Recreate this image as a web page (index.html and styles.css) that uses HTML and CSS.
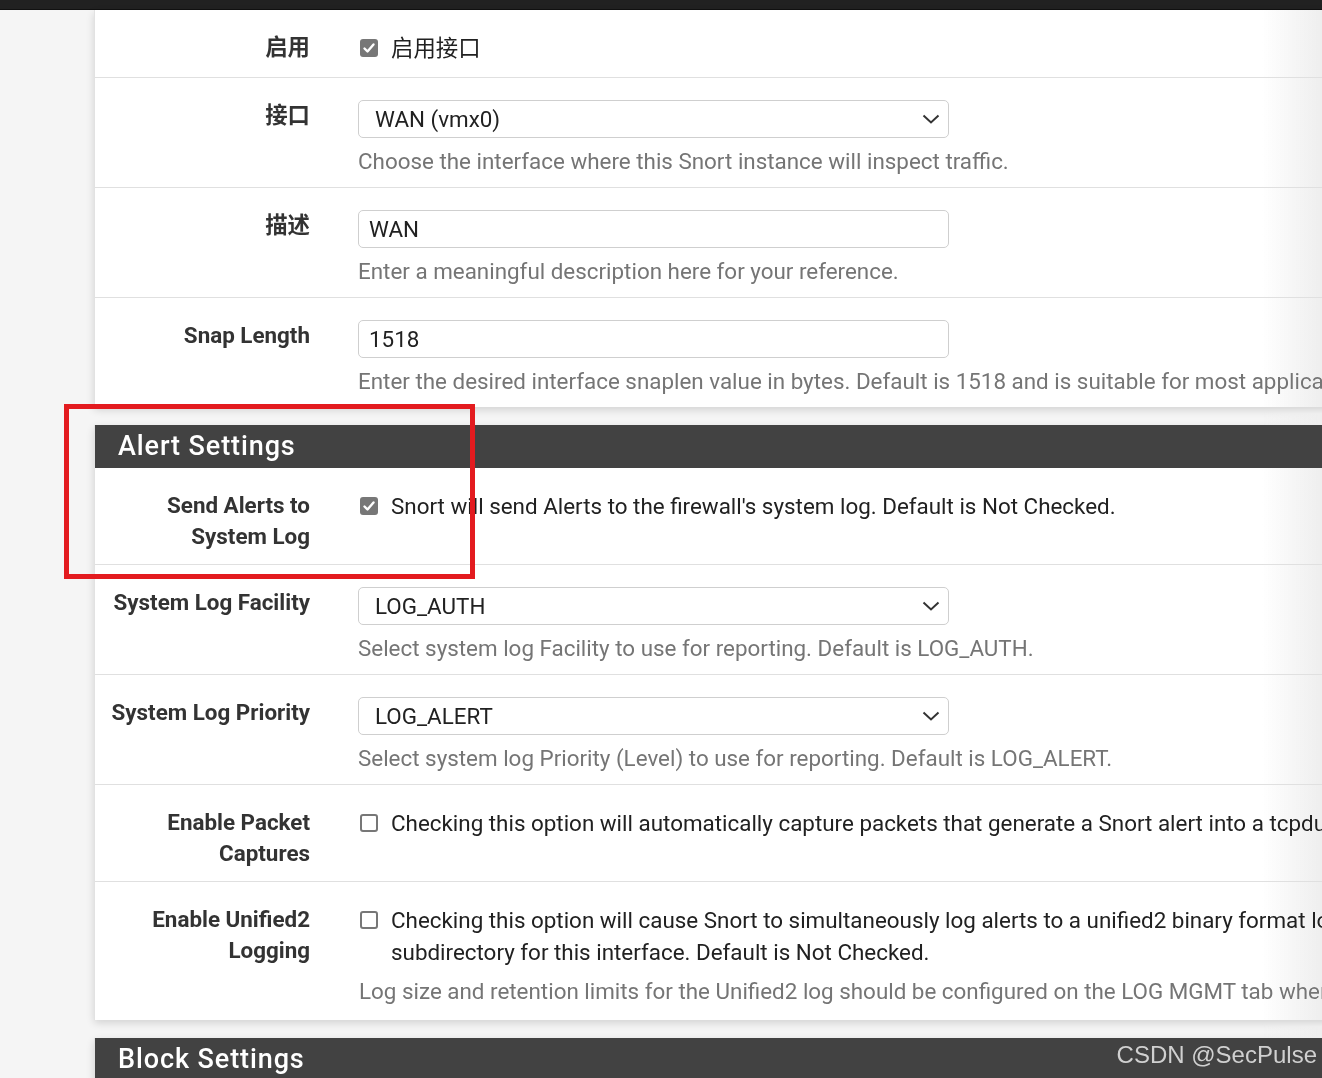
FILE: index.html
```html
<!DOCTYPE html>
<html lang="zh">
<head>
<meta charset="utf-8">
<title>Snort Interface Settings</title>
<link rel="stylesheet" href="styles.css">
</head>
<body>
<div class="topbar"><span class="brand">COMMUNITY EDITION</span></div>
<main class="page">
  <section class="panel">
    <div class="row first">
      <div class="label">启用</div>
      <div class="field">
        <label class="check"><span class="box on"><svg viewBox="0 0 18 18" width="18" height="18"><path d="M4.5 9.5l3 3 6-7" fill="none" stroke="#fff" stroke-width="2.4" stroke-linecap="round" stroke-linejoin="round"/></svg></span>启用接口</label>
      </div>
    </div>
    <div class="row">
      <div class="label">接口</div>
      <div class="field">
        <div class="select"><span>WAN (vmx0)</span><svg class="chev" viewBox="0 0 18 10" width="18" height="10"><path d="M1.5 1.5l7.5 7 7.5-7" fill="none" stroke="#333" stroke-width="2"/></svg></div>
        <div class="help">Choose the interface where this Snort instance will inspect traffic.</div>
      </div>
    </div>
    <div class="row">
      <div class="label">描述</div>
      <div class="field">
        <div class="input">WAN</div>
        <div class="help">Enter a meaningful description here for your reference.</div>
      </div>
    </div>
    <div class="row end">
      <div class="label">Snap Length</div>
      <div class="field">
        <div class="input">1518</div>
        <div class="help">Enter the desired interface snaplen value in bytes. Default is 1518 and is suitable for most applications.</div>
      </div>
    </div>
  </section>

  <section class="panel">
    <h2 class="panel-title">Alert Settings</h2>
    <div class="row">
      <div class="label">Send Alerts to<br>System Log</div>
      <div class="field">
        <label class="check"><span class="box on"><svg viewBox="0 0 18 18" width="18" height="18"><path d="M4.5 9.5l3 3 6-7" fill="none" stroke="#fff" stroke-width="2.4" stroke-linecap="round" stroke-linejoin="round"/></svg></span>Snort will send Alerts to the firewall's system log. Default is Not Checked.</label>
      </div>
    </div>
    <div class="row">
      <div class="label">System Log Facility</div>
      <div class="field">
        <div class="select"><span>LOG_AUTH</span><svg class="chev" viewBox="0 0 18 10" width="18" height="10"><path d="M1.5 1.5l7.5 7 7.5-7" fill="none" stroke="#333" stroke-width="2"/></svg></div>
        <div class="help">Select system log Facility to use for reporting. Default is LOG_AUTH.</div>
      </div>
    </div>
    <div class="row">
      <div class="label">System Log Priority</div>
      <div class="field">
        <div class="select"><span>LOG_ALERT</span><svg class="chev" viewBox="0 0 18 10" width="18" height="10"><path d="M1.5 1.5l7.5 7 7.5-7" fill="none" stroke="#333" stroke-width="2"/></svg></div>
        <div class="help">Select system log Priority (Level) to use for reporting. Default is LOG_ALERT.</div>
      </div>
    </div>
    <div class="row">
      <div class="label">Enable Packet<br>Captures</div>
      <div class="field">
        <label class="check"><span class="box"></span>Checking this option will automatically capture packets that generate a Snort alert into a tcpdump compatible file</label>
      </div>
    </div>
    <div class="row end tall">
      <div class="label">Enable Unified2<br>Logging</div>
      <div class="field">
        <label class="check"><span class="box"></span><span>Checking this option will cause Snort to simultaneously log alerts to a unified2 binary format log file in the logging<br>subdirectory for this interface. Default is Not Checked.</span></label>
        <div class="help help-check">Log size and retention limits for the Unified2 log should be configured on the LOG MGMT tab when this option is enabled.</div>
      </div>
    </div>
  </section>

  <section class="panel">
    <h2 class="panel-title">Block Settings</h2>
  </section>
</main>
<div class="annot"></div>
<div class="fade"></div>
<div class="watermark">CSDN @SecPulse</div>
</body>
</html>
```

FILE: styles.css
```css
html, body {
  margin: 0;
  padding: 0;
  overflow: hidden;
}
body {
  background: #f5f5f5;
  font-family: Roboto, "Noto Sans CJK SC", sans-serif;
  color: #212121;
  width: 1322px;
  height: 1078px;
  position: relative;
}
.topbar {
  height: 9px;
  background: #212121;
  border-bottom: 1px solid #111;
  overflow: hidden;
  padding-left: 85px;
}
.brand {
  display: block;
  color: #fff;
  font-size: 15px;
  font-weight: 700;
  letter-spacing: 2.6px;
  line-height: 15px;
  margin-top: -12px;
}
.page {
  padding-left: 94px;
  width: 1600px;
}
.panel {
  background: #fff;
  border-left: 1px solid #e2e2e2;
  box-shadow: 0 3px 8px rgba(0, 0, 0, 0.14);
  margin-bottom: 18px;
}
.panel-title {
  margin: 0;
  height: 43px;
  line-height: 43px;
  background: #424242;
  color: #fff;
  font-size: 27px;
  font-weight: 500;
  letter-spacing: 0.9px;
  padding-left: 23px;
}
.row {
  display: grid;
  grid-template-columns: 240px 1fr;
  padding: 22px 0 12px;
  border-bottom: 1px solid #e0e0e0;
}
.row.first {
  padding-bottom: 13px;
}
.row.end {
  border-bottom: none;
}
.row.tall {
  padding-bottom: 15px;
}
.label {
  text-align: right;
  padding-right: 25px;
  font-weight: 700;
  font-size: 22.4px;
  line-height: 31px;
  color: #333;
}
.field {
  padding-left: 23px;
  font-size: 22.4px;
}
.check {
  display: flex;
  align-items: flex-start;
  line-height: 32px;
  color: #212121;
  white-space: nowrap;
}
.box {
  flex: none;
  width: 18px;
  height: 18px;
  box-sizing: border-box;
  border: 2px solid #777;
  border-radius: 3px;
  background: #fff;
  margin: 7px 13px 0 2px;
  display: flex;
}
.box.on {
  background: #777;
  border: none;
}
.select, .input {
  width: 591px;
  height: 38px;
  box-sizing: border-box;
  border: 1px solid #cfcfcf;
  border-radius: 5px;
  display: flex;
  align-items: center;
  font-size: 22.4px;
  color: #212121;
}
.select {
  padding: 0 8px 0 16px;
  justify-content: space-between;
}
.input {
  padding: 0 10px;
}
.help {
  margin-top: 9px;
  line-height: 28px;
  color: #757575;
  white-space: nowrap;
}
.help-check {
  margin-top: 9px;
  padding-left: 1px;
}
.annot {
  position: absolute;
  left: 64px;
  top: 404px;
  width: 411px;
  height: 175px;
  box-sizing: border-box;
  border: 5px solid #e31b1f;
  pointer-events: none;
}
.fade {
  position: absolute;
  top: 10px;
  right: 0;
  width: 60px;
  height: 1068px;
  background: linear-gradient(to right, rgba(240, 240, 240, 0), rgba(238, 238, 238, 1));
  mix-blend-mode: darken;
  pointer-events: none;
}
.watermark {
  position: absolute;
  right: 5px;
  top: 1039px;
  font-family: "Liberation Sans", Arial, sans-serif;
  font-size: 24px;
  line-height: 32px;
  color: #d0d0d0;
}
```
